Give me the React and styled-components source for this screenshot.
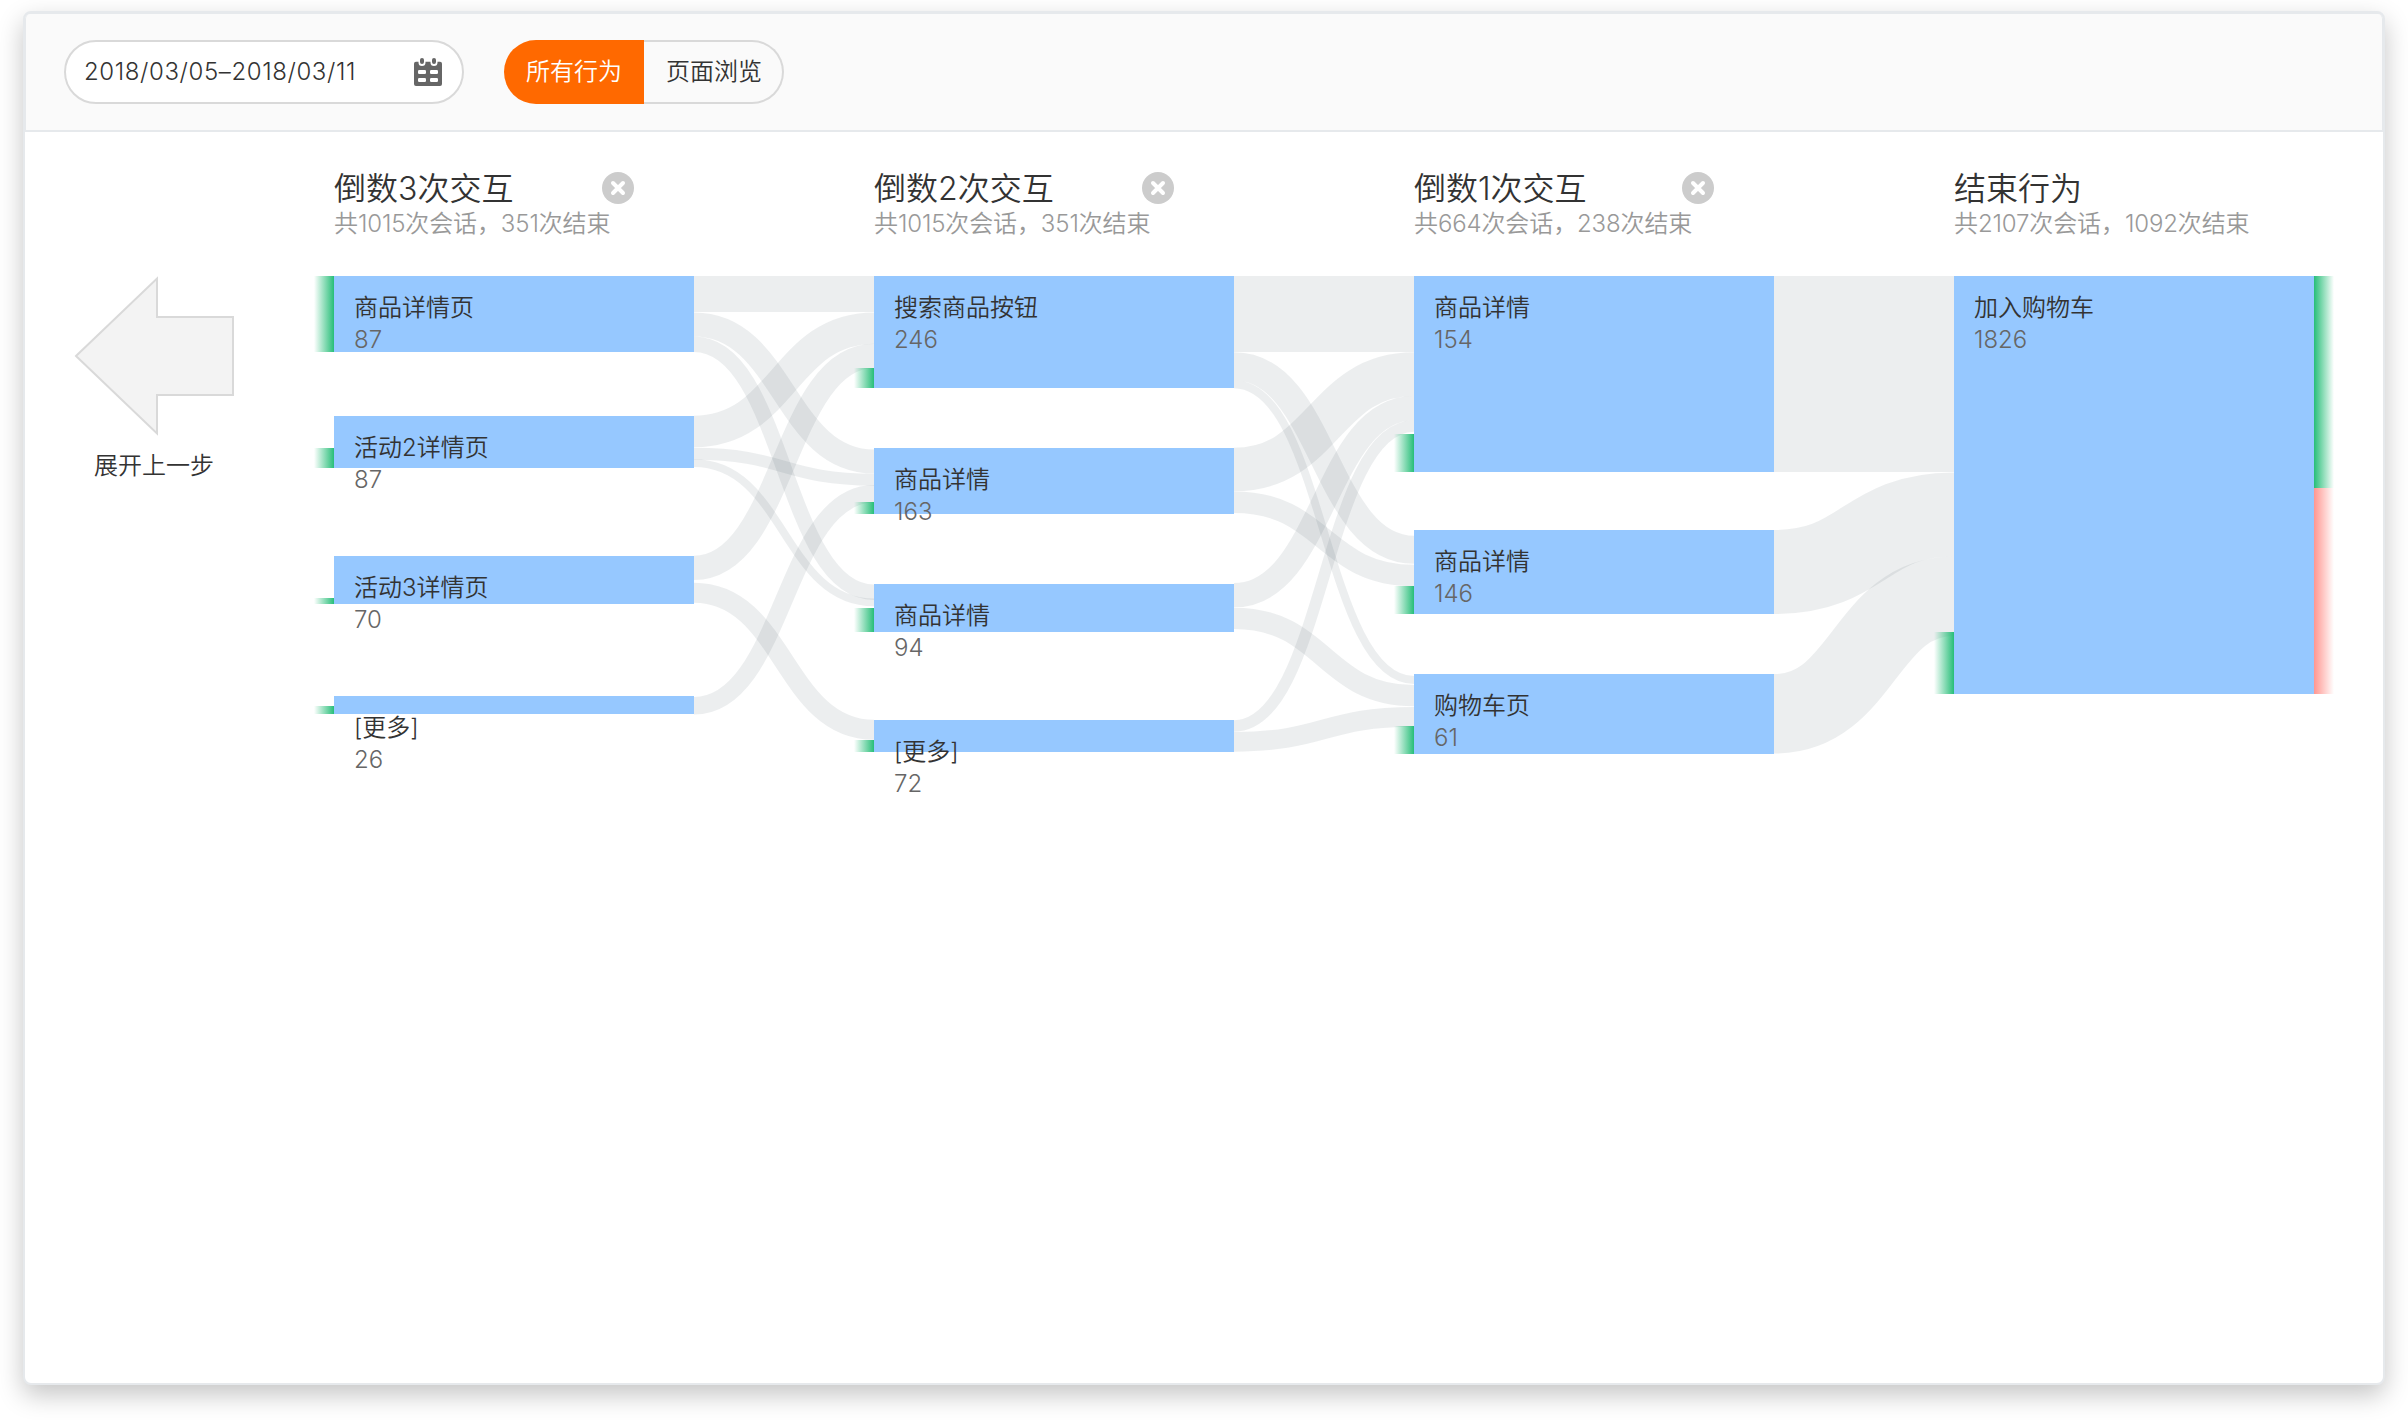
import React from "react";
import styled, { createGlobalStyle, css } from "styled-components";

const Global = createGlobalStyle`
  *, *::before, *::after { box-sizing: border-box; }
  body {
    margin: 0;
    background: #fff;
    color: #333;
    font-family: Inter, "Noto Sans CJK SC", sans-serif;
    font-size: 24px;
    font-weight: 350;
    line-height: 32px;
  }
`;

const Page = styled.div`
  height: 1420px;
  padding: 11px 23px 35px;
  overflow: hidden;
`;

const Card = styled.main`
  height: 1374px;
  display: flex;
  flex-direction: column;
  background: #fff;
  border: 2px solid #e6e9ec;
  border-top-width: 3px;
  border-radius: 8px;
  box-shadow: 0 10px 26px rgba(0, 0, 0, 0.23);
`;

const Toolbar = styled.header`
  height: 118px;
  flex: none;
  display: flex;
  align-items: center;
  gap: 40px;
  padding: 0 38px;
  background: #fafafa;
  border: solid #e6e9ec;
  border-width: 0 1px 2px;
  border-radius: 5px 5px 0 0;
`;

const DateField = styled.button`
  width: 400px;
  height: 64px;
  display: flex;
  align-items: center;
  justify-content: space-between;
  padding: 0 19px 0 18px;
  font: inherit;
  color: #333;
  background: #fff;
  border: 2px solid #d9d9d9;
  border-radius: 32px;
`;

const DateText = styled.span`
  white-space: nowrap;
  letter-spacing: 0.6px;
`;

const Segments = styled.div`
  display: flex;
`;

const Segment = styled.button`
  width: 140px;
  height: 64px;
  padding: 0 0 0 2px;
  font: inherit;
  border: 2px solid #d9d9d9;
  border-left: 0;
  border-radius: 0 32px 32px 0;
  color: #333;
  background: #fafafa;
  ${(p) =>
    p.$active &&
    css`
      padding: 0;
      color: #fff;
      background: #ff6900;
      border: 0;
      border-radius: 32px 0 0 32px;
    `}
`;

const Flow = styled.section`
  display: flex;
  padding: 36px 0 0 48px;
`;

const Expand = styled.div`
  width: 261px;
  flex: none;
  padding-top: 107px;
`;

const ExpandButton = styled.button`
  display: flex;
  flex-direction: column;
  align-items: center;
  gap: 13px;
  padding: 0;
  border: 0;
  background: none;
  font: inherit;
  color: #333;
`;

const Column = styled.div`
  position: relative;
  z-index: 1;
  width: 360px;
  flex: none;
`;

const ColumnHead = styled.div`
  height: 108px;
`;

const TitleRow = styled.div`
  width: 300px;
  height: 40px;
  display: flex;
  align-items: center;
  justify-content: space-between;
`;

const Title = styled.h2`
  margin: 0;
  padding-top: 2px;
  font-size: 32px;
  line-height: 40px;
  font-weight: 350;
  white-space: nowrap;
`;

const Subtitle = styled.p`
  margin: 0;
  color: #999;
  letter-spacing: -0.12px;
  white-space: nowrap;
`;

const Node = styled.div`
  position: relative;
  height: ${(p) => p.$height}px;
  margin-top: ${(p) => p.$gap}px;
  padding: 16px 20px 0;
  background: #96c8ff;
`;

const Name = styled.div`
  white-space: nowrap;
`;

const Count = styled.div`
  color: #666;
`;

const Entry = styled.i`
  position: absolute;
  right: 100%;
  bottom: 0;
  width: 20px;
  height: ${(p) => p.$height}px;
  background: linear-gradient(to left, #27be78, rgba(39, 190, 120, 0));
`;

const Exit = styled.i`
  position: absolute;
  left: 100%;
  top: ${(p) => p.$top}px;
  width: 20px;
  height: ${(p) => p.$height}px;
  background: ${(p) =>
    p.$lost
      ? "linear-gradient(to right, #ff9690, rgba(255, 150, 144, 0))"
      : "linear-gradient(to right, #27be78, rgba(39, 190, 120, 0))"};
`;

const LinkLayer = styled.svg`
  display: block;
  flex: none;
  margin-top: 108px;
  fill: none;
  stroke: #485a64;
  stroke-opacity: 0.1;
`;

const CalendarIcon = () => (
  <svg width="30" height="30" viewBox="0 0 30 30">
    <path
      fill="#666"
      d="M3 4.700H5.500V5.500a3.500 3.500 0 0 0 7 0V4.700H17.500V5.500a3.500 3.500 0 0 0 7 0V4.700H27a2 2 0 0 1 2 2V27a2 2 0 0 1-2 2H3a2 2 0 0 1-2-2V6.700a2 2 0 0 1 2-2z"
    />
    <g fill="#fff">
      <rect x="5" y="13" width="8" height="4" rx="1.200" />
      <rect x="17" y="13" width="8" height="4" rx="1.200" />
      <rect x="5" y="21" width="8" height="4" rx="1.200" />
      <rect x="17" y="21" width="8" height="4" rx="1.200" />
    </g>
    <rect x="7" y="1" width="4" height="6" rx="2" fill="#666" />
    <rect x="19" y="1" width="4" height="6" rx="2" fill="#666" />
  </svg>
);

const CloseIcon = () => (
  <svg width="32" height="32" viewBox="0 0 32 32">
    <circle cx="16" cy="16" r="16" fill="#ccc" />
    <path d="M11 11 21 21M21 11 11 21" stroke="#fff" strokeWidth="4" strokeLinecap="round" />
  </svg>
);

const ArrowIcon = () => (
  <svg width="162" height="162" viewBox="0 0 162 162">
    <path d="M3 81 84 3.500V42H160V120H84V158.500Z" fill="#f3f3f3" stroke="#d9d9d9" strokeWidth="2" />
  </svg>
);

const columns = [
  {
    title: "倒数3次交互",
    note: "共1015次会话，351次结束",
    closable: true,
    nodes: [
      { name: "商品详情页", count: 87, gap: 0, height: 76, entry: 76 },
      { name: "活动2详情页", count: 87, gap: 64, height: 52, entry: 20 },
      { name: "活动3详情页", count: 70, gap: 88, height: 48, entry: 6 },
      { name: "[更多]", count: 26, gap: 92, height: 18, entry: 8 },
    ],
    links: [
      [18, 18, 36],
      [48.5, 185.5, 24],
      [68.3, 316.3, 15.4],
      [155.5, 52.2, 31.6],
      [177.8, 203.7, 12],
      [187.2, 326.4, 7.8],
      [291.8, 79.8, 24.2],
      [316.7, 453.8, 20],
      [429.8, 217.8, 17.6],
    ],
  },
  {
    title: "倒数2次交互",
    note: "共1015次会话，351次结束",
    closable: true,
    nodes: [
      { name: "搜索商品按钮", count: 246, gap: 0, height: 112, entry: 20 },
      { name: "商品详情", count: 163, gap: 60, height: 66, entry: 12 },
      { name: "商品详情", count: 94, gap: 70, height: 48, entry: 24 },
      { name: "[更多]", count: 72, gap: 88, height: 32, entry: 12 },
    ],
    links: [
      [38, 38, 76],
      [90.3, 273.7, 28],
      [108.2, 404, 8],
      [193.5, 98.2, 43.7],
      [226.2, 299.5, 21.5],
      [319.2, 132.2, 24.3],
      [342.3, 419.7, 21.3],
      [450, 150, 11.5],
      [465.8, 440.8, 19.7],
    ],
  },
  {
    title: "倒数1次交互",
    note: "共664次会话，238次结束",
    closable: true,
    nodes: [
      { name: "商品详情", count: 154, gap: 0, height: 196, entry: 38 },
      { name: "商品详情", count: 146, gap: 58, height: 84, entry: 28 },
      { name: "购物车页", count: 61, gap: 60, height: 80, entry: 28 },
    ],
    links: [
      [98, 98, 196],
      [296, 238.5, 84],
      [437.8, 320.3, 79.5],
    ],
  },
  {
    title: "结束行为",
    note: "共2107次会话，1092次结束",
    nodes: [
      {
        name: "加入购物车",
        count: 1826,
        gap: 0,
        height: 418,
        entry: 62,
        exits: [
          { top: 0, height: 212 },
          { top: 212, height: 206, lost: true },
        ],
      },
    ],
  },
];

const Links = ({ items }) => (
  <LinkLayer width="180" height="500" viewBox="0 0 180 500">
    {items.map(([from, to, width], i) => (
      <path key={i} d={`M0 ${from}C90 ${from} 90 ${to} 180 ${to}`} strokeWidth={width} />
    ))}
  </LinkLayer>
);

export default function App() {
  return (
    <>
      <Global />
      <Page>
        <Card>
          <Toolbar>
            <DateField>
              <DateText>2018/03/05–2018/03/11</DateText>
              <CalendarIcon />
            </DateField>
            <Segments>
              <Segment $active>所有行为</Segment>
              <Segment>页面浏览</Segment>
            </Segments>
          </Toolbar>
          <Flow>
            <Expand>
              <ExpandButton>
                <ArrowIcon />
                <span>展开上一步</span>
              </ExpandButton>
            </Expand>
            {columns.map((col) => (
              <React.Fragment key={col.title}>
                <Column>
                  <ColumnHead>
                    <TitleRow>
                      <Title>{col.title}</Title>
                      {col.closable && <CloseIcon />}
                    </TitleRow>
                    <Subtitle>{col.note}</Subtitle>
                  </ColumnHead>
                  {col.nodes.map((n, i) => (
                    <Node key={i} $height={n.height} $gap={n.gap}>
                      <Entry $height={n.entry} />
                      <Name>{n.name}</Name>
                      <Count>{n.count}</Count>
                      {n.exits?.map((e) => (
                        <Exit key={e.top} $top={e.top} $height={e.height} $lost={e.lost} />
                      ))}
                    </Node>
                  ))}
                </Column>
                {col.links && <Links items={col.links} />}
              </React.Fragment>
            ))}
          </Flow>
        </Card>
      </Page>
    </>
  );
}
